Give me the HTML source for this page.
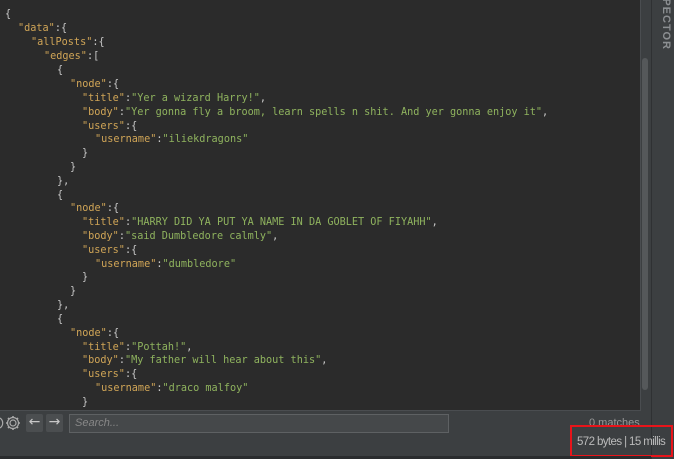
<!DOCTYPE html>
<html><head><style>
body{margin:0;width:674px;height:459px;background:#3c3f41;overflow:hidden;position:relative;font-family:"DejaVu Sans Mono",monospace}
#ed{position:absolute;left:0;top:0;width:640px;height:410px;background:#2b2b2b;border-right:1px solid #4a4d50;border-bottom:1px solid #4a4d50;overflow:hidden}
.l{position:absolute;font-size:10.2px;line-height:14px;white-space:pre;color:#c8c8c8}
.k{color:#d0a557}.s{color:#8fb35e}
#sb{position:absolute;left:642px;top:58px;width:6px;height:332px;background:#55585a;border-radius:3px}
#rp{position:absolute;left:651px;top:0;width:23px;height:459px;background:#3c3f41;border-left:1px solid #2f3133}
#rp span{position:absolute;left:2px;top:-10px;transform-origin:0 0;transform:rotate(90deg) translate(0,-18px);color:#8c8f92;font:bold 11px "Liberation Sans",sans-serif;letter-spacing:1px}
.btn{position:absolute;top:414px;width:17px;height:18px;background:#4b4e50;border-radius:2px;color:#c8c8c8;font:14px "DejaVu Sans",sans-serif;text-align:center;line-height:17px}
#search{position:absolute;left:69px;top:414px;width:373px;height:17px;border:1px solid #5e6163;background:#45484a;color:#888;font:italic 11px "Liberation Sans",sans-serif;line-height:17px;padding-left:5px}
#m{position:absolute;left:589px;top:417px;color:#999;font:11px "Liberation Sans",sans-serif}
#st{position:absolute;left:577px;top:436px;color:#bbb;font:11.5px "Liberation Sans",sans-serif;letter-spacing:-0.6px;white-space:nowrap}
#box{position:absolute;left:570px;top:425px;width:99px;height:28px;border:2px solid #e8141a}
#bot{position:absolute;left:0;top:456px;width:651px;height:3px;background:#2a2c2e}
</style></head><body>
<div id="ed">
<div class="l" style="left:5px;top:8px">{</div>
<div class="l" style="left:18px;top:22px"><span class="k">"data"</span>:{</div>
<div class="l" style="left:31px;top:36px"><span class="k">"allPosts"</span>:{</div>
<div class="l" style="left:44px;top:50px"><span class="k">"edges"</span>:[</div>
<div class="l" style="left:57px;top:64px">{</div>
<div class="l" style="left:70px;top:78px"><span class="k">"node"</span>:{</div>
<div class="l" style="left:82px;top:92px"><span class="k">"title"</span>:<span class="s">"Yer a wizard Harry!"</span>,</div>
<div class="l" style="left:82px;top:106px"><span class="k">"body"</span>:<span class="s">"Yer gonna fly a broom, learn spells n shit. And yer gonna enjoy it"</span>,</div>
<div class="l" style="left:82px;top:120px"><span class="k">"users"</span>:{</div>
<div class="l" style="left:95px;top:133px"><span class="k">"username"</span>:<span class="s">"iliekdragons"</span></div>
<div class="l" style="left:82px;top:147px">}</div>
<div class="l" style="left:70px;top:161px">}</div>
<div class="l" style="left:57px;top:175px">},</div>
<div class="l" style="left:57px;top:189px">{</div>
<div class="l" style="left:70px;top:202px"><span class="k">"node"</span>:{</div>
<div class="l" style="left:82px;top:216px"><span class="k">"title"</span>:<span class="s">"HARRY DID YA PUT YA NAME IN DA GOBLET OF FIYAHH"</span>,</div>
<div class="l" style="left:82px;top:230px"><span class="k">"body"</span>:<span class="s">"said Dumbledore calmly"</span>,</div>
<div class="l" style="left:82px;top:244px"><span class="k">"users"</span>:{</div>
<div class="l" style="left:95px;top:258px"><span class="k">"username"</span>:<span class="s">"dumbledore"</span></div>
<div class="l" style="left:82px;top:271px">}</div>
<div class="l" style="left:70px;top:285px">}</div>
<div class="l" style="left:57px;top:299px">},</div>
<div class="l" style="left:57px;top:313px">{</div>
<div class="l" style="left:70px;top:327px"><span class="k">"node"</span>:{</div>
<div class="l" style="left:82px;top:341px"><span class="k">"title"</span>:<span class="s">"Pottah!"</span>,</div>
<div class="l" style="left:82px;top:354px"><span class="k">"body"</span>:<span class="s">"My father will hear about this"</span>,</div>
<div class="l" style="left:82px;top:368px"><span class="k">"users"</span>:{</div>
<div class="l" style="left:95px;top:382px"><span class="k">"username"</span>:<span class="s">"draco malfoy"</span></div>
<div class="l" style="left:82px;top:396px">}</div>
</div>
<div id="sb"></div>
<div id="rp"><span>SPECTOR</span></div>
<svg style="position:absolute;left:0;top:413px" width="24" height="20" viewBox="0 0 24 20"><circle cx="13" cy="10" r="3" fill="none" stroke="#aaa" stroke-width="1.2"/><path d="M13 3v2M13 15v2M6 10h2M18 10h2M8 5l1.4 1.4M16.6 13.6L18 15M8 15l1.4-1.4M16.6 6.4L18 5" stroke="#aaa" stroke-width="1.6"/><circle cx="13" cy="10" r="5.5" fill="none" stroke="#aaa" stroke-width="1.2"/><path d="M0 5a6 6 0 0 1 0 10" fill="none" stroke="#aaa" stroke-width="1.2"/></svg>
<div class="btn" style="left:26px">←</div>
<div class="btn" style="left:46px">→</div>
<div id="search">Search...</div>
<div id="m">0 matches</div>
<div id="st">572 bytes | 15 millis</div>
<div id="box"></div>
<div id="bot"></div>
</body></html>
